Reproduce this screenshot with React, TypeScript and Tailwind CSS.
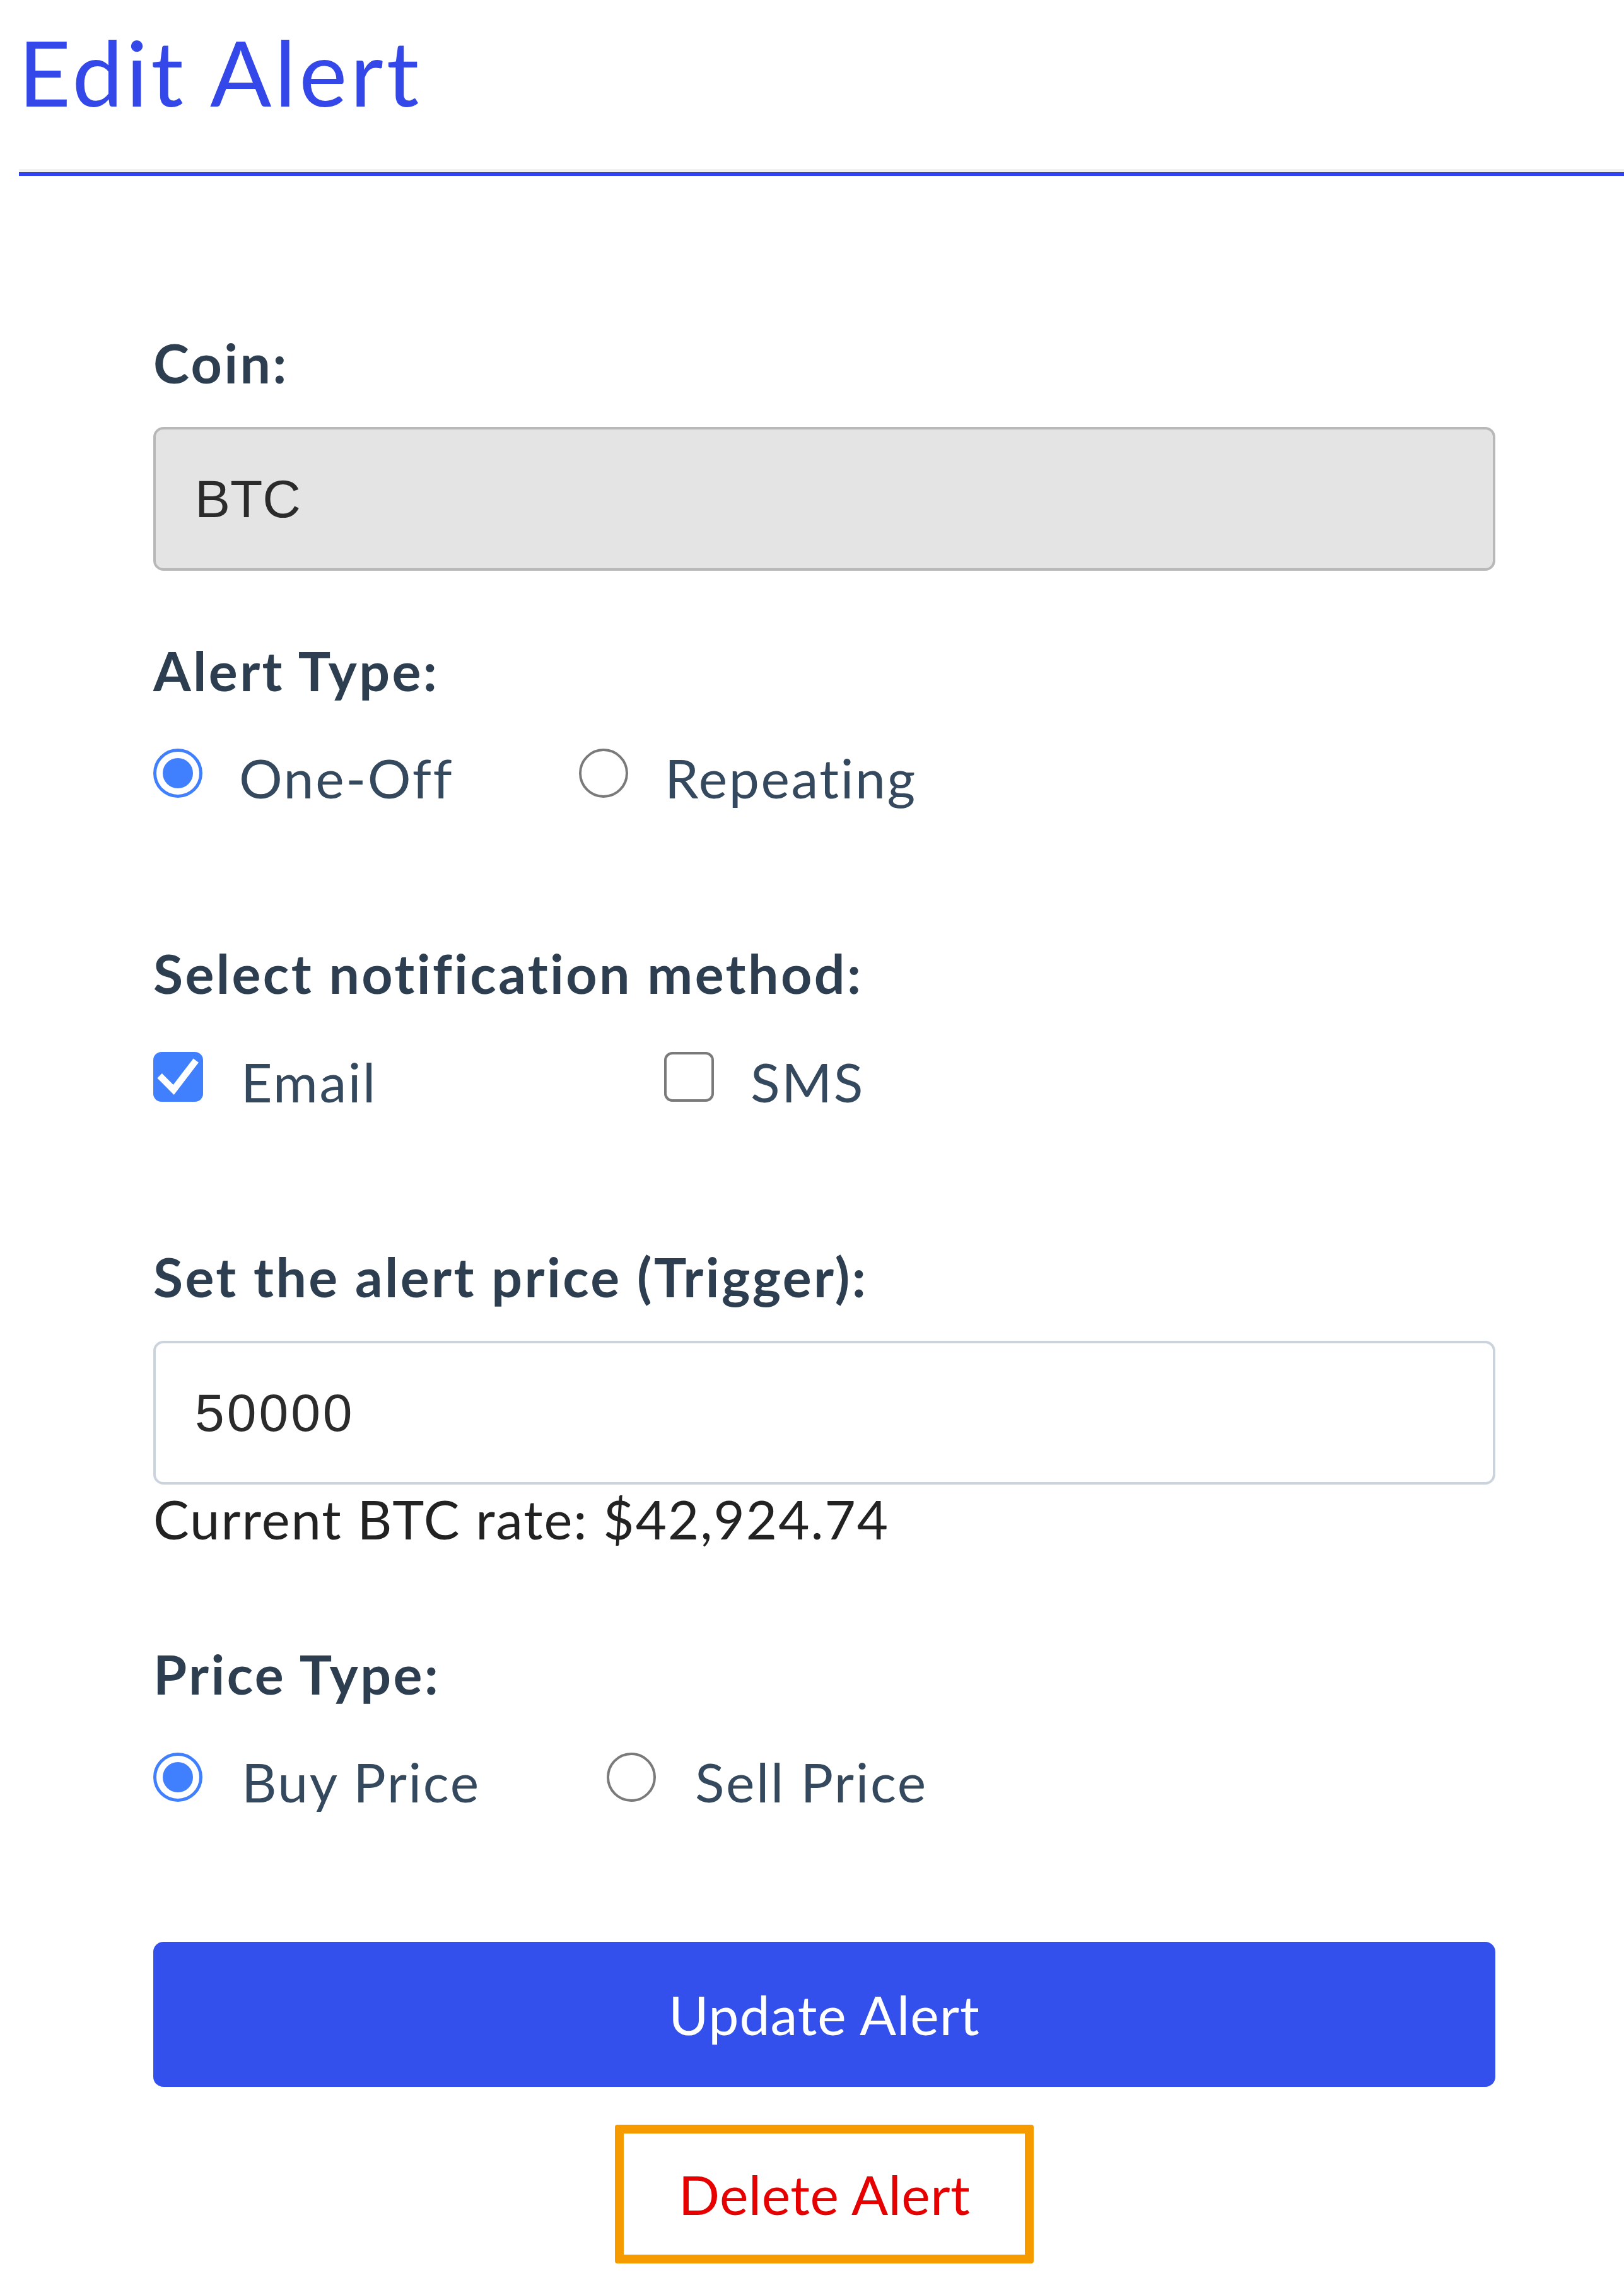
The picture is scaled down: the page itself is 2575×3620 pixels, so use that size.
import React from "react";

function Radio({ checked }: { checked: boolean }) {
  return checked ? (
    <span className="flex h-[78px] w-[78px] shrink-0 items-center justify-center rounded-full border-[5px] border-[#4080ff] bg-white">
      <span className="h-[48px] w-[48px] rounded-full bg-[#4080ff]" />
    </span>
  ) : (
    <span className="h-[78px] w-[78px] shrink-0 rounded-full border-[4px] border-[#7a7a7a] bg-white" />
  );
}

function Checkbox({ checked }: { checked: boolean }) {
  return checked ? (
    <span className="flex h-[79px] w-[79px] shrink-0 items-center justify-center rounded-[13px] bg-[#4080ff]">
      <svg viewBox="0 0 24 24" className="h-[79px] w-[79px]">
        <polyline points="4.2,12.6 9.8,18.2 19.6,5.4" fill="none" stroke="#ffffff" strokeWidth="3.2" strokeLinecap="square" />
      </svg>
    </span>
  ) : (
    <span className="h-[79px] w-[79px] shrink-0 rounded-[13px] border-[4px] border-[#7a7a7a] bg-white" />
  );
}

const label = "text-[86px] leading-none font-bold tracking-[3.4px] text-[#2c3e50] font-['Lato',sans-serif]";
const option = "text-[86px] leading-none tracking-[2.6px] text-[#34495e] font-['Lato',sans-serif]";

export default function App() {
  return (
    <div className="min-h-[3620px] w-[2575px] bg-white font-['Lato',sans-serif]">
      <div className="pl-[29px] pt-[42px]">
        <h1 className="text-[144px] font-normal leading-none tracking-[5px] text-[#3448ea]">Edit Alert</h1>
      </div>
      <div className="ml-[30px] mt-[82px] border-t-[5px] border-[#f1f1f1]">
        <div className="h-[6px] bg-[#2f44f0]" />
      </div>

      <div className="ml-[243px] w-[2128px] pb-[30px]">
        <div className={`${label} mt-[253px]`}>Coin:</div>
        <div className="mt-[59px] flex h-[228px] items-center rounded-[16px] border-[4px] border-[#b8b8b8] bg-[#e4e4e4] pl-[62px] font-['Liberation_Sans',sans-serif] text-[84px] text-[#2b2b2b]">
          BTC
        </div>

        <div className={`${label} mt-[115px]`}>Alert Type:</div>
        <div className="mt-[81px] flex items-start">
          <div className="flex w-[675px] items-start gap-[58px]">
            <Radio checked />
            <span className={`${option} mt-[3px]`}>One-Off</span>
          </div>
          <div className="flex items-start gap-[58px]">
            <Radio checked={false} />
            <span className={`${option} mt-[3px]`}>Repeating</span>
          </div>
        </div>

        <div className={`${label} mt-[224px]`}>Select notification method:</div>
        <div className="mt-[82px] flex items-start">
          <div className="flex w-[810px] items-start gap-[60px]">
            <Checkbox checked />
            <span className={`${option} mt-[4px]`}>Email</span>
          </div>
          <div className="flex items-start gap-[58px]">
            <Checkbox checked={false} />
            <span className={`${option} mt-[4px]`}>SMS</span>
          </div>
        </div>

        <div className={`${label} mt-[223px]`}>Set the alert price (Trigger):</div>
        <div className="mt-[59px] flex h-[228px] items-center rounded-[16px] border-[4px] border-[#cbd3dc] bg-white pl-[62px] font-['Liberation_Sans',sans-serif] text-[84px] tracking-[4px] text-[#2b2b2b]">
          50000
        </div>
        <div className="mt-[12px] text-[85px] leading-none tracking-[2px] text-[#222222]">Current BTC rate: $42,924.74</div>

        <div className={`${label} mt-[160px]`}>Price Type:</div>
        <div className="mt-[82px] flex items-start">
          <div className="flex w-[719px] items-start gap-[62px]">
            <Radio checked />
            <span className={`${option} mt-[3px]`}>Buy Price</span>
          </div>
          <div className="flex items-start gap-[62px]">
            <Radio checked={false} />
            <span className={`${option} mt-[3px]`}>Sell Price</span>
          </div>
        </div>

        <button className="mt-[211px] flex h-[230px] w-full items-center justify-center rounded-[16px] bg-[#3350ec] text-[86px] leading-none tracking-[1px] text-white">
          Update Alert
        </button>

        <div className="mt-[60px] flex justify-center">
          <button className="flex h-[220px] w-[664px] items-center justify-center rounded-[4px] border-[14px] border-[#f59b00] bg-white text-[86px] leading-none tracking-[0.5px] text-[#e60000]">
            Delete Alert
          </button>
        </div>
      </div>
    </div>
  );
}
